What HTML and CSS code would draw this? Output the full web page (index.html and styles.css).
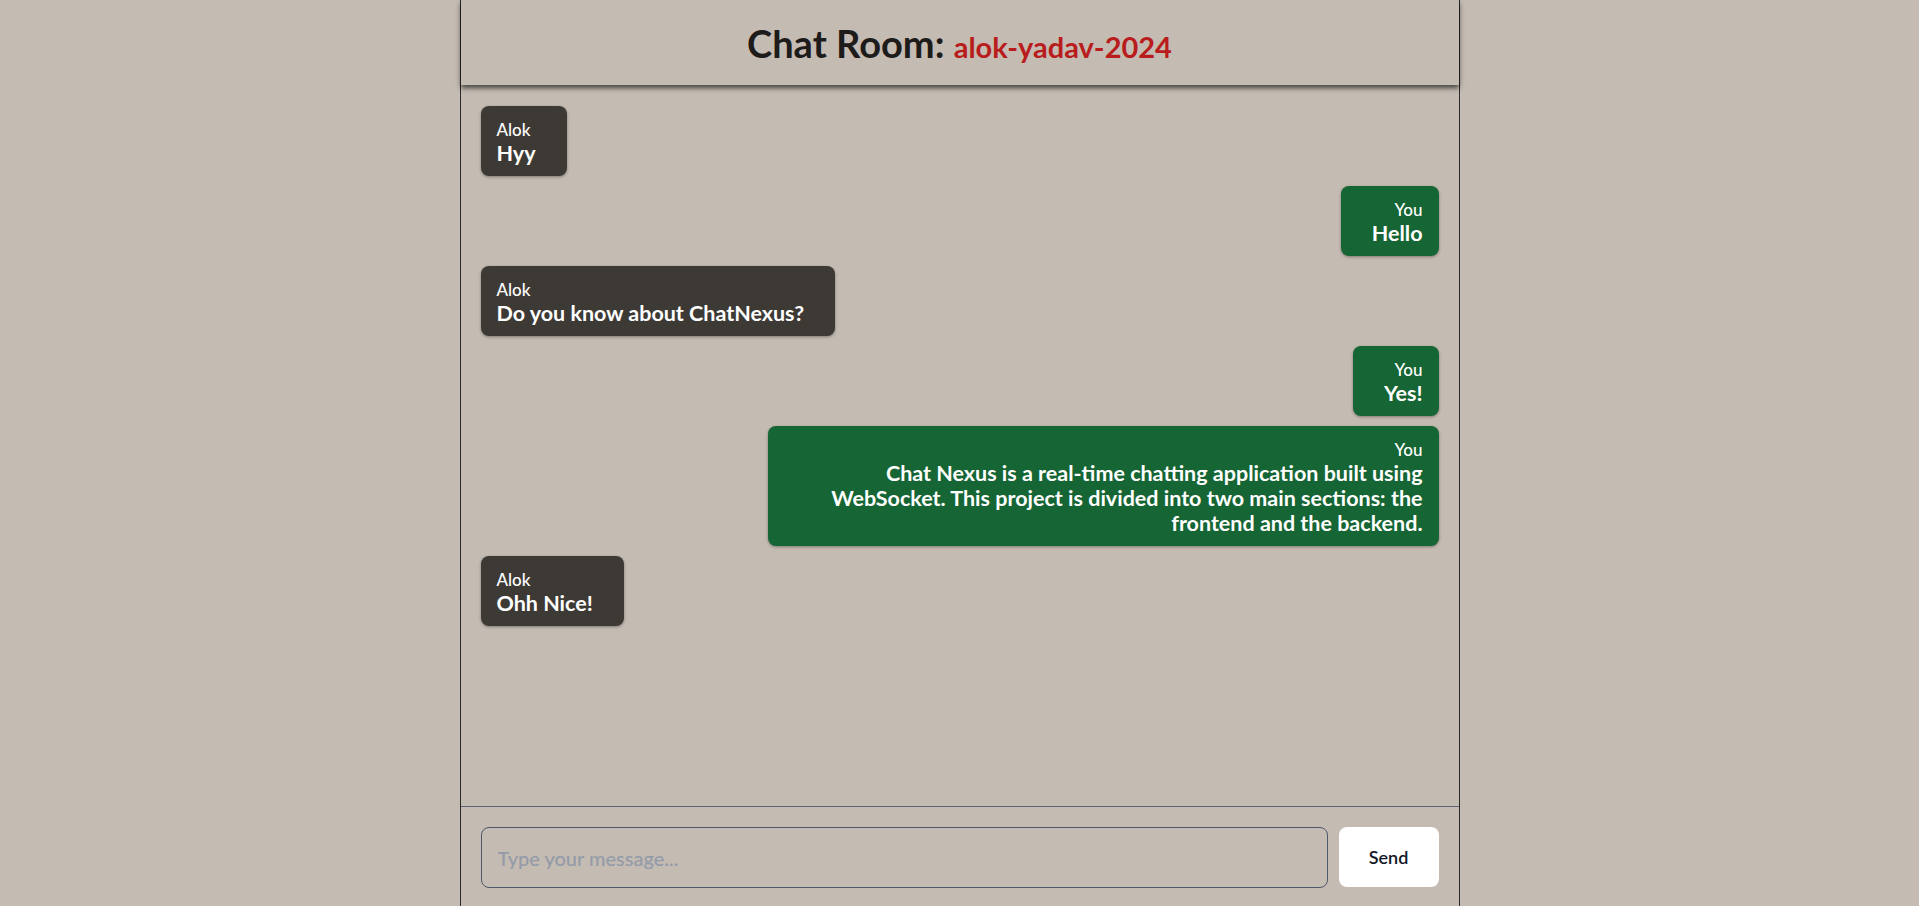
FILE: index.html
```html
<!DOCTYPE html>
<html lang="en">
<head>
<meta charset="utf-8">
<title>Chat Room</title>
<link rel="stylesheet" href="styles.css">
</head>
<body>
<div class="chat">
  <header class="chat-header">
    <h1 class="title">Chat Room: <span class="room">alok-yadav-2024</span></h1>
  </header>
  <main class="messages">
    <div class="msg msg-in">
      <div class="sender">Alok</div>
      <div class="text">Hyy</div>
    </div>
    <div class="msg msg-out">
      <div class="sender">You</div>
      <div class="text">Hello</div>
    </div>
    <div class="msg msg-in">
      <div class="sender">Alok</div>
      <div class="text">Do you know about ChatNexus?</div>
    </div>
    <div class="msg msg-out">
      <div class="sender">You</div>
      <div class="text">Yes!</div>
    </div>
    <div class="msg msg-out">
      <div class="sender">You</div>
      <div class="text">Chat Nexus is a real-time chatting application built using WebSocket. This project is divided into two main sections: the frontend and the backend.</div>
    </div>
    <div class="msg msg-in">
      <div class="sender">Alok</div>
      <div class="text">Ohh Nice!</div>
    </div>
  </main>
  <footer class="composer">
    <input class="composer-input" type="text" placeholder="Type your message..." autofocus>
    <button class="composer-send" type="button">Send</button>
  </footer>
</div>
</body>
</html>
```

FILE: styles.css
```css
* {
  box-sizing: border-box;
}

html, body {
  margin: 0;
  padding: 0;
  height: 100%;
  overflow: hidden;
}

body {
  background: #c4bbb2;
  font-family: Lato, "Noto Sans", sans-serif;
  color: #1c1c1c;
}

.chat {
  width: 1000px;
  height: 100vh;
  margin: 0 auto;
  border-left: 1px solid #2a2a2a;
  border-right: 1px solid #2a2a2a;
  display: flex;
  flex-direction: column;
}

.chat-header {
  height: 85px;
  flex: none;
  display: flex;
  align-items: center;
  justify-content: center;
  background: #c4bbb2;
  box-shadow: 0 3px 5px rgba(0, 0, 0, 0.65);
  position: relative;
  z-index: 1;
}

.title {
  margin: 0;
  padding-top: 5px;
  font-size: 38px;
  font-weight: 700;
  line-height: 44px;
  color: #1d1c1a;
}

.room {
  font-size: 29px;
  color: #b91c1c;
}

.messages {
  flex: 1;
  padding: 21px 20px;
  display: flex;
  flex-direction: column;
  gap: 10px;
  overflow: hidden;
}

.msg {
  max-width: 70%;
  border-radius: 8px;
  color: #ffffff;
  box-shadow: 0 1px 3px rgba(0, 0, 0, 0.35);
}

.msg-in {
  align-self: flex-start;
  background: #3d3a36;
  padding: 13px 31px 10px 16px;
}

.msg-out {
  align-self: flex-end;
  background: #166534;
  padding: 13px 16px 10px 31px;
  text-align: right;
}

.sender {
  font-size: 17px;
  font-weight: 500;
  line-height: 22px;
}

.text {
  font-size: 21.5px;
  font-weight: 700;
  line-height: 25px;
}

.composer {
  flex: none;
  border-top: 1px solid #5b6374;
  padding: 20px 20px 18px;
  display: flex;
  gap: 11px;
}

.composer-input {
  flex: 1;
  height: 61px;
  padding: 0 16px;
  border: 1px solid #4f596a;
  border-radius: 8px;
  background: transparent;
  font-family: Lato, "Noto Sans", sans-serif;
  font-size: 20px;
  font-weight: 500;
  color: #1c1c1c;
  outline: none;
}

.composer-input::placeholder {
  color: #939aa8;
}

.composer-send {
  width: 100px;
  height: 60px;
  border: none;
  border-radius: 8px;
  background: #ffffff;
  font-family: Lato, "Noto Sans", sans-serif;
  font-size: 18px;
  font-weight: 600;
  color: #111827;
}
```
